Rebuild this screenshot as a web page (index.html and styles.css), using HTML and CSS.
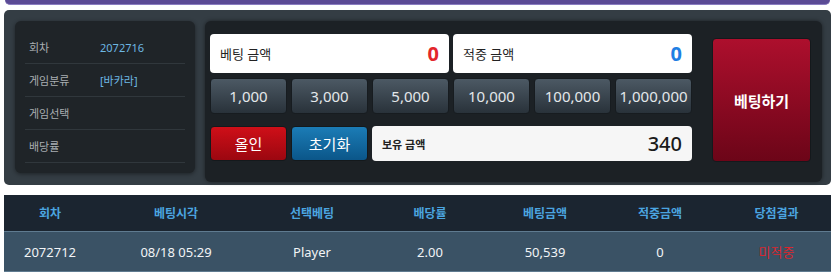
FILE: index.html
```html
<!DOCTYPE html>
<html lang="ko">
<head>
    <meta charset="UTF-8">
    <title>Betting</title>
    <link rel="stylesheet" href="styles.css">
</head>
<body>
    <div class="top-bar"></div>

    <div class="bet-panel">
        <div class="info-box">
            <div class="info-row">
                <span class="info-label">회차</span>
                <span class="info-value">2072716</span>
            </div>
            <div class="info-row">
                <span class="info-label">게임분류</span>
                <span class="info-value">[바카라]</span>
            </div>
            <div class="info-row">
                <span class="info-label">게임선택</span>
                <span class="info-value"></span>
            </div>
            <div class="info-row">
                <span class="info-label">배당률</span>
                <span class="info-value"></span>
            </div>
        </div>

        <div class="bet-box">
            <div class="bet-controls">
                <div class="amount-field half">
                    <span class="field-label">베팅 금액</span>
                    <span class="field-value red">0</span>
                </div>
                <div class="amount-field half">
                    <span class="field-label">적중 금액</span>
                    <span class="field-value blue">0</span>
                </div>

                <button class="chip">1,000</button>
                <button class="chip">3,000</button>
                <button class="chip">5,000</button>
                <button class="chip">10,000</button>
                <button class="chip">100,000</button>
                <button class="chip">1,000,000</button>

                <button class="btn btn-allin">올인</button>
                <button class="btn btn-reset">초기화</button>
                <div class="amount-field balance">
                    <span class="field-label bold">보유 금액</span>
                    <span class="field-value dark">340</span>
                </div>
            </div>
            <button class="btn-bet">베팅하기</button>
        </div>
    </div>

    <div class="history">
        <div class="history-row history-head">
            <div>회차</div>
            <div>베팅시각</div>
            <div>선택베팅</div>
            <div>배당률</div>
            <div>베팅금액</div>
            <div>적중금액</div>
            <div>당첨결과</div>
        </div>
        <div class="history-row history-item">
            <div>2072712</div>
            <div>08/18 05:29</div>
            <div>Player</div>
            <div>2.00</div>
            <div>50,539</div>
            <div>0</div>
            <div class="lose">미적중</div>
        </div>
    </div>
</body>
</html>
```

FILE: styles.css
```css
* {
    margin: 0;
    padding: 0;
    box-sizing: border-box;
    font-family: 'Noto Sans', 'Noto Sans CJK KR', sans-serif;
}

body {
    background-color: #fff;
    padding: 0 4px;
}

.top-bar {
    height: 5px;
    margin: 0 1px;
    background-color: #5b4b95;
    border-bottom: 1px solid #8a7dc0;
    border-radius: 0 0 5px 5px;
}

.bet-panel {
    display: flex;
    align-items: flex-start;
    gap: 10px;
    height: 175px;
    margin-top: 5px;
    padding: 11px 9px 3px 11px;
    background-color: #343d44;
    border-radius: 5px;
}

.info-box {
    width: 180px;
    height: 152px;
    padding: 10px 10px 0;
    background-color: #1f2428;
    border-radius: 6px;
    box-shadow: 0 1px 4px rgba(0,0,0,0.45);
}

.info-row {
    display: flex;
    align-items: center;
    height: 33px;
    padding-left: 4px;
    border-bottom: 1px solid #30373c;
}

.info-label {
    width: 71px;
    font-size: 11px;
    color: #a9aeb2;
}

.info-value {
    font-size: 11px;
    color: #6db7e3;
}

.bet-box {
    flex: 1;
    display: flex;
    align-items: flex-start;
    height: 161px;
    padding: 13px 11px 0 5px;
    background-color: #1c2125;
    border-radius: 6px;
    box-shadow: 0 0 4px rgba(0,0,0,0.5);
}

.bet-controls {
    width: 482px;
    display: grid;
    grid-template-columns: repeat(6, 77px);
    grid-template-rows: 39px 36px 42px;
    column-gap: 4px;
    row-gap: 5px;
}

.bet-controls .btn,
.bet-controls .balance {
    margin-top: 7px;
}

.amount-field {
    display: flex;
    align-items: center;
    justify-content: space-between;
    padding: 0 10px;
    background-color: #fff;
    border-radius: 4px;
}

.amount-field.half {
    grid-column: span 3;
}

.amount-field.balance {
    grid-column: span 4;
    background-color: #f6f6f6;
}

.field-label {
    font-size: 13px;
    color: #222;
}

.field-label.bold {
    font-size: 11px;
    font-weight: bold;
}

.field-value {
    font-size: 20px;
    font-weight: bold;
    line-height: 1;
}

.field-value.red { color: #e3262b; }
.field-value.blue { color: #1f7fe3; }
.field-value.dark { color: #1a1a1a; font-weight: 500; }

.chip {
    width: 100%;
    font-size: 15px;
    color: #e3e7ea;
    background: linear-gradient(#4c5964, #29323a);
    border: 1px solid #171c20;
    border-radius: 4px;
    cursor: pointer;
}

.btn {
    width: 100%;
    font-size: 15px;
    color: #fff;
    border: 1px solid #14191c;
    border-radius: 4px;
    cursor: pointer;
}

.btn-allin {
    background: linear-gradient(#cf0f18, #9b0710);
}

.btn-reset {
    background: linear-gradient(#1b7cb6, #0b5689);
}

.btn-bet {
    width: 99px;
    height: 124px;
    margin: 4px 0 0 20px;
    font-size: 15px;
    font-weight: bold;
    color: #fff;
    background: linear-gradient(#ad0f2d, #6c0518);
    border: 1px solid #14191c;
    border-radius: 4px;
    cursor: pointer;
}

.history {
    margin-top: 10px;
}

.history-row {
    display: grid;
    grid-template-columns: 92px 160px 112px 124px 106px 124px 1fr;
    text-align: center;
}

.history-head {
    height: 36px;
    align-items: center;
    background-color: #1b2530;
    font-size: 12px;
    font-weight: bold;
    color: #4ba5e0;
}

.history-item {
    height: 41px;
    align-items: center;
    background-color: #3a5265;
    border-top: 1px solid #5f7b90;
    border-bottom: 1px solid #5f7b90;
    font-size: 13px;
    color: #f2f4f6;
}

.history-item .lose {
    color: #d9262e;
}
```
